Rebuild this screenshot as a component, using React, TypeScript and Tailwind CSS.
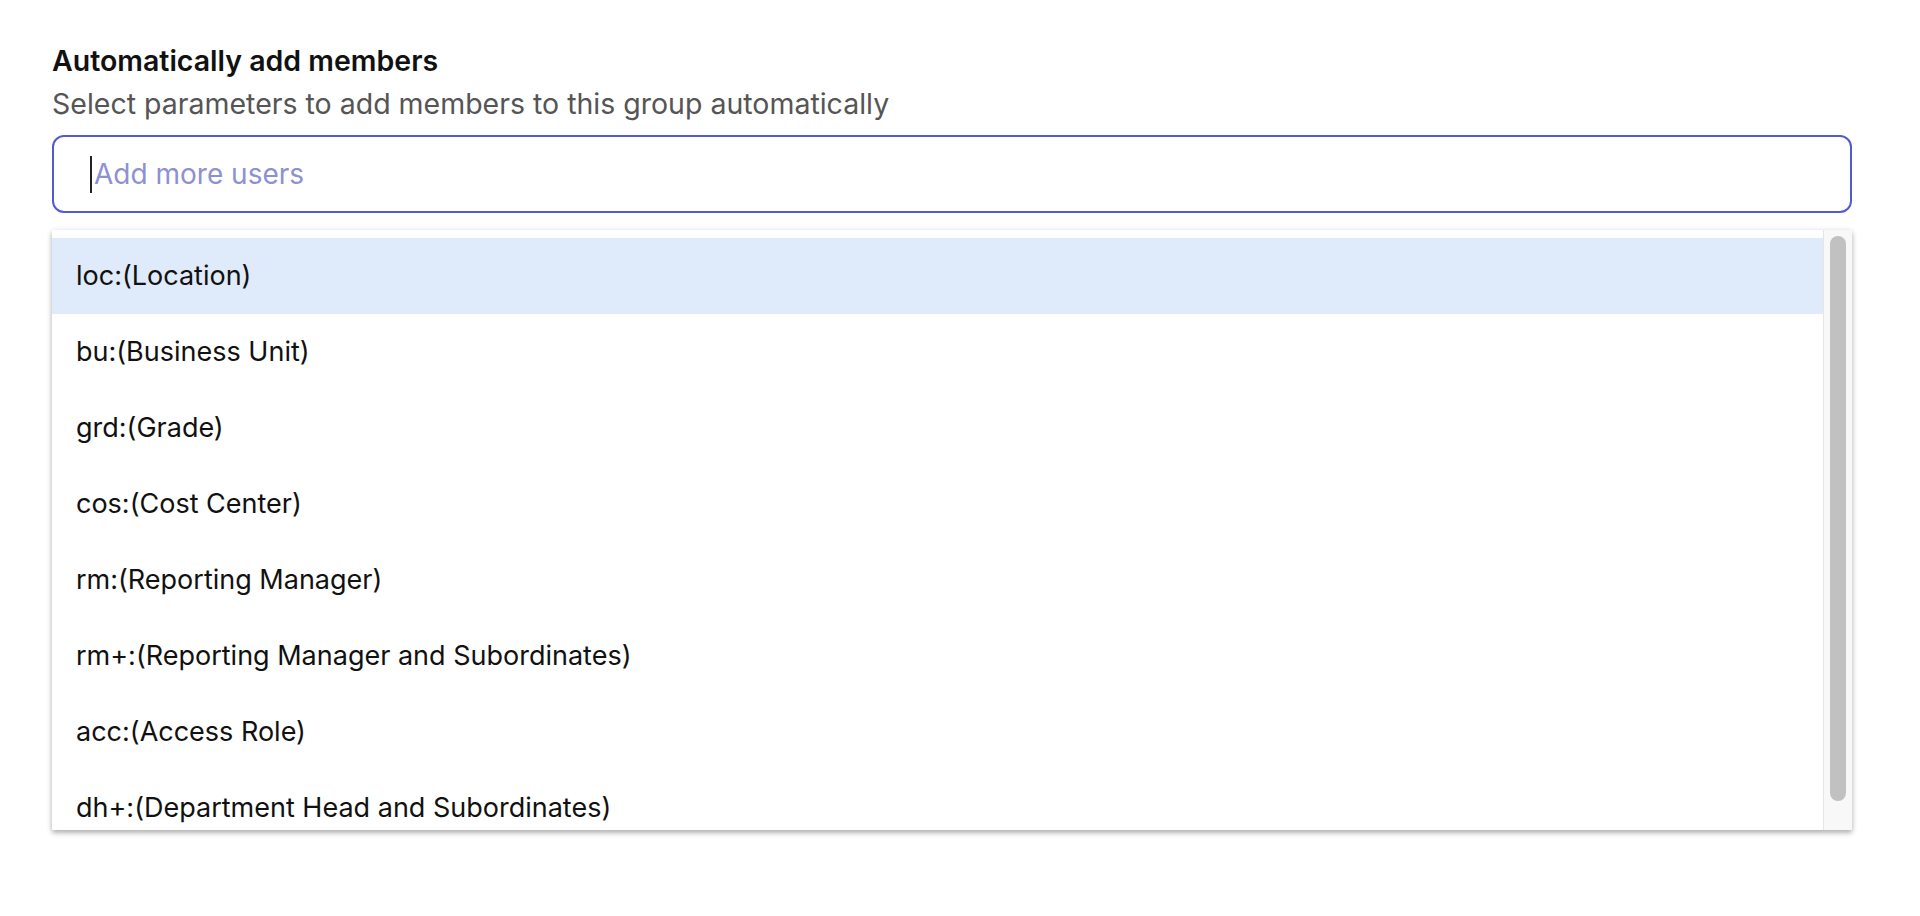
import React from 'react'

const options = [
  'loc:(Location)',
  'bu:(Business Unit)',
  'grd:(Grade)',
  'cos:(Cost Center)',
  'rm:(Reporting Manager)',
  'rm+:(Reporting Manager and Subordinates)',
  'acc:(Access Role)',
  'dh+:(Department Head and Subordinates)',
]

export default function App() {
  const active = 0

  return (
    <div className="min-h-screen bg-white font-['Inter',sans-serif] pl-[52px] pr-[68px] pt-[44px]">
      {/* Heading */}
      <h3 className="text-[28.5px] leading-[34px] font-semibold text-[#111111]">
        Automatically add members
      </h3>
      <p className="mt-[9px] text-[28.5px] leading-[34px] text-[#555555]">
        Select parameters to add members to this group automatically
      </p>

      {/* Search input */}
      <div className="mt-[14px] h-[78px] w-[1800px] rounded-[12px] border-2 border-[#5459d4] flex items-center pl-[36px]">
        <span className="w-[2px] h-[37px] bg-[#222222] mr-[2px]" />
        <span className="text-[28px] text-[#8d91d2]">Add more users</span>
      </div>

      {/* Options dropdown */}
      <div className="mt-[17px] w-[1800px] h-[600px] flex bg-white shadow-[0_3px_5px_rgba(0,0,0,0.28),0_0_6px_rgba(0,0,0,0.08)] overflow-hidden">
        <ul className="flex-1 pt-[8px] overflow-hidden">
          {options.map((opt, i) => (
            <li
              key={opt}
              className={`h-[76px] flex items-center pl-[24px] text-[27px] text-[#111111] ${
                i === active ? 'bg-[#dfeafa]' : 'bg-white'
              }`}
            >
              {opt}
            </li>
          ))}
        </ul>
        <div className="w-[29px] bg-[#f8f8f8] border-l border-[#e6e6e6] pt-[6px] pl-[6px]">
          <div className="w-[16px] h-[565px] rounded-full bg-[#c1c1c1]" />
        </div>
      </div>
    </div>
  )
}
